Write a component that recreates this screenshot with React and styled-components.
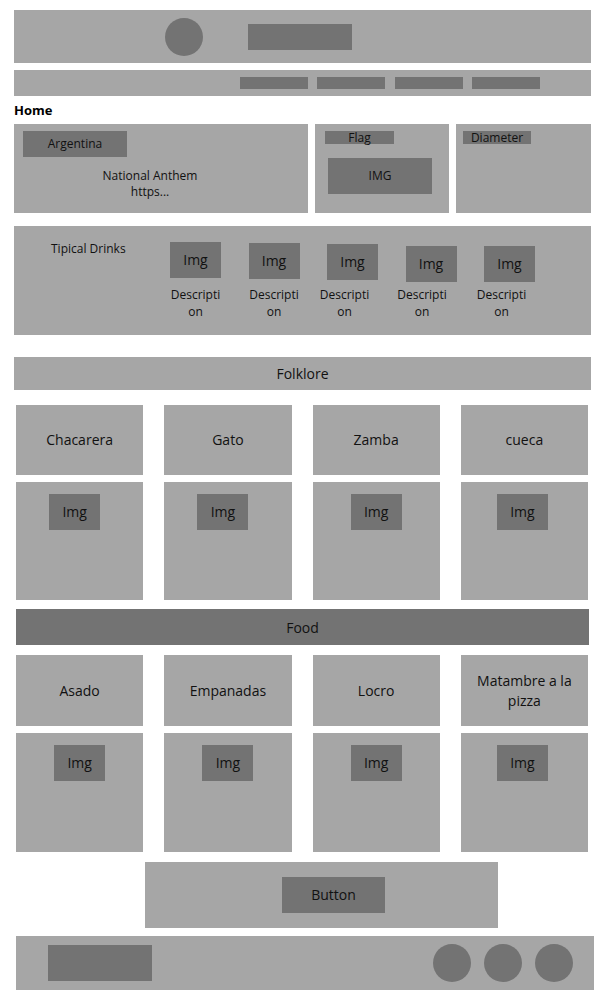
import styled, { createGlobalStyle } from "styled-components"

const LIGHT = "#a6a6a6"
const DARK = "#737373"

const Global = createGlobalStyle`
  body {
    margin: 0;
    background: #fff;
    font-family: "Open Sans", "Liberation Sans", sans-serif;
    color: #111;
  }
`

const Page = styled.div`
  width: 600px;
  padding: 10px 0;
  display: flex;
  flex-direction: column;
`

const Header = styled.header`
  margin: 0 9px 0 14px;
  height: 53px;
  background: ${LIGHT};
  display: flex;
  align-items: center;
  gap: 45px;
  padding-left: 151px;
  box-sizing: border-box;
`

const Circle = styled.div`
  width: 38px;
  height: 38px;
  border-radius: 50%;
  background: ${DARK};
  flex-shrink: 0;
`

const DarkBox = styled.div`
  width: ${p => p.$w}px;
  height: ${p => p.$h}px;
  background: ${DARK};
  display: flex;
  align-items: center;
  justify-content: center;
  font-size: ${p => p.$fs || 14}px;
  line-height: 1;
  flex-shrink: 0;
  margin: ${p => p.$m || 0};
`

const Nav = styled.nav`
  margin: 7px 9px 0 14px;
  height: 26px;
  background: ${LIGHT};
  display: flex;
  align-items: center;
  justify-content: flex-end;
  gap: 9.5px;
  padding-right: 51px;
`

const PageTitle = styled.h1`
  margin: 0 0 0 14px;
  padding: 5px 0;
  font-size: 13px;
  line-height: 18px;
  font-weight: 700;
  color: #000;
`

const InfoRow = styled.section`
  margin: 0 9px 0 14px;
  height: 89px;
  display: grid;
  grid-template-columns: 294px 134px 1fr;
  gap: 7px;
`

const Panel = styled.div`
  background: ${LIGHT};
  padding: ${p => p.$pad};
  display: flex;
  flex-direction: column;
  align-items: flex-start;
`

const AnthemText = styled.p`
  align-self: stretch;
  margin: 11px 0 0;
  padding-right: 22px;
  text-align: center;
  font-size: 12px;
  line-height: 16px;
`

const Drinks = styled.section`
  margin: 13px 9px 0 14px;
  height: 109px;
  background: ${LIGHT};
  display: flex;
  padding: 15px 0 0 37px;
  box-sizing: border-box;
`

const DrinksTitle = styled.div`
  width: 119px;
  font-size: 12px;
  line-height: 16px;
`

const DrinkList = styled.div`
  display: flex;
  gap: 27.5px;
  padding-top: 1px;
`

const Drink = styled.div`
  width: 51px;
  display: flex;
  flex-direction: column;
  align-items: center;
  padding-top: ${p => p.$drop}px;
`

const Desc = styled.p`
  margin: ${p => 8 - p.$drop}px 0 0 ${p => p.$shift * 2}px;
  width: 53px;
  text-align: center;
  font-size: 12px;
  line-height: 17px;
  overflow-wrap: anywhere;
`

const SectionBar = styled.div`
  margin: ${p => p.$m};
  height: ${p => p.$h}px;
  background: ${p => (p.$dark ? DARK : LIGHT)};
  display: flex;
  align-items: center;
  justify-content: center;
  font-size: 14px;
`

const CardGrid = styled.div`
  margin: ${p => p.$m};
  width: 572px;
  display: grid;
  grid-template-columns: repeat(4, 1fr);
  grid-template-rows: ${p => p.$rows};
  column-gap: 21px;
  row-gap: 7px;
`

const LabelCard = styled.div`
  background: ${LIGHT};
  display: flex;
  align-items: center;
  justify-content: center;
  text-align: center;
  font-size: 14px;
  line-height: 20px;
  padding: 0 8px;
`

const ImageCard = styled.div`
  background: ${LIGHT};
  display: flex;
  justify-content: center;
  padding: 12px ${p => (p.$shift < 0 ? -p.$shift * 2 : 0)}px 0 0;
  box-sizing: border-box;
`

const ButtonArea = styled.section`
  margin: 10px 0 0 145px;
  width: 353px;
  height: 66px;
  background: ${LIGHT};
  display: flex;
  align-items: center;
  padding-left: 137px;
  box-sizing: border-box;
`

const Footer = styled.footer`
  margin: 8px 6px 0 16px;
  height: 54px;
  background: ${LIGHT};
  display: flex;
  align-items: center;
  padding: 0 21px 0 32px;
`

const Socials = styled.div`
  margin-left: auto;
  display: flex;
  gap: 13px;
`

const drinks = [
  { drop: 0, shift: 0 },
  { drop: 1, shift: 0 },
  { drop: 2, shift: -8 },
  { drop: 4, shift: -9 },
  { drop: 4, shift: -8 },
]
const dances = [
  { name: "Chacarera", shift: -5 },
  { name: "Gato", shift: -5 },
  { name: "Zamba", shift: 0 },
  { name: "cueca", shift: -2 },
]
const foods = [
  { name: "Asado", shift: 0 },
  { name: "Empanadas", shift: 0 },
  { name: "Locro", shift: 0 },
  { name: "Matambre a la pizza", shift: -2 },
]

function Cards({ items, m, rows }) {
  return (
    <CardGrid $m={m} $rows={rows}>
      {items.map(it => (
        <LabelCard key={it.name}>{it.name}</LabelCard>
      ))}
      {items.map(it => (
        <ImageCard key={it.name + "-img"} $shift={it.shift}>
          <DarkBox $w={51} $h={36}>Img</DarkBox>
        </ImageCard>
      ))}
    </CardGrid>
  )
}

export default function App() {
  return (
    <>
      <Global />
      <Page>
        <Header>
          <Circle />
          <DarkBox $w={104} $h={26} />
        </Header>

        <Nav>
          <DarkBox $w={68} $h={12} />
          <DarkBox $w={68} $h={12} />
          <DarkBox $w={68} $h={12} />
          <DarkBox $w={68} $h={12} />
        </Nav>

        <PageTitle>Home</PageTitle>

        <InfoRow>
          <Panel $pad="7px 9px">
            <DarkBox $w={104} $h={26} $fs={12}>Argentina</DarkBox>
            <AnthemText>
              National Anthem
              <br />
              https...
            </AnthemText>
          </Panel>
          <Panel $pad="7px 10px">
            <DarkBox $w={69} $h={13} $fs={12}>Flag</DarkBox>
            <DarkBox $w={104} $h={36} $fs={12} $m="14px 0 0 3px">IMG</DarkBox>
          </Panel>
          <Panel $pad="7px 7px">
            <DarkBox $w={68} $h={13} $fs={12}>Diameter</DarkBox>
          </Panel>
        </InfoRow>

        <Drinks>
          <DrinksTitle>Tipical Drinks</DrinksTitle>
          <DrinkList>
            {drinks.map((d, i) => (
              <Drink key={i} $drop={d.drop}>
                <DarkBox $w={51} $h={36}>Img</DarkBox>
                <Desc $drop={d.drop} $shift={d.shift}>Description</Desc>
              </Drink>
            ))}
          </DrinkList>
        </Drinks>

        <SectionBar $m="22px 9px 0 14px" $h={33}>Folklore</SectionBar>
        <Cards items={dances} m="15px 0 0 16px" rows="70px 118px" />

        <SectionBar $m="9px 11px 0 16px" $h={36} $dark>Food</SectionBar>
        <Cards items={foods} m="10px 0 0 16px" rows="71px 119px" />

        <ButtonArea>
          <DarkBox $w={103} $h={36}>Button</DarkBox>
        </ButtonArea>

        <Footer>
          <DarkBox $w={104} $h={36} />
          <Socials>
            <Circle />
            <Circle />
            <Circle />
          </Socials>
        </Footer>
      </Page>
    </>
  )
}
